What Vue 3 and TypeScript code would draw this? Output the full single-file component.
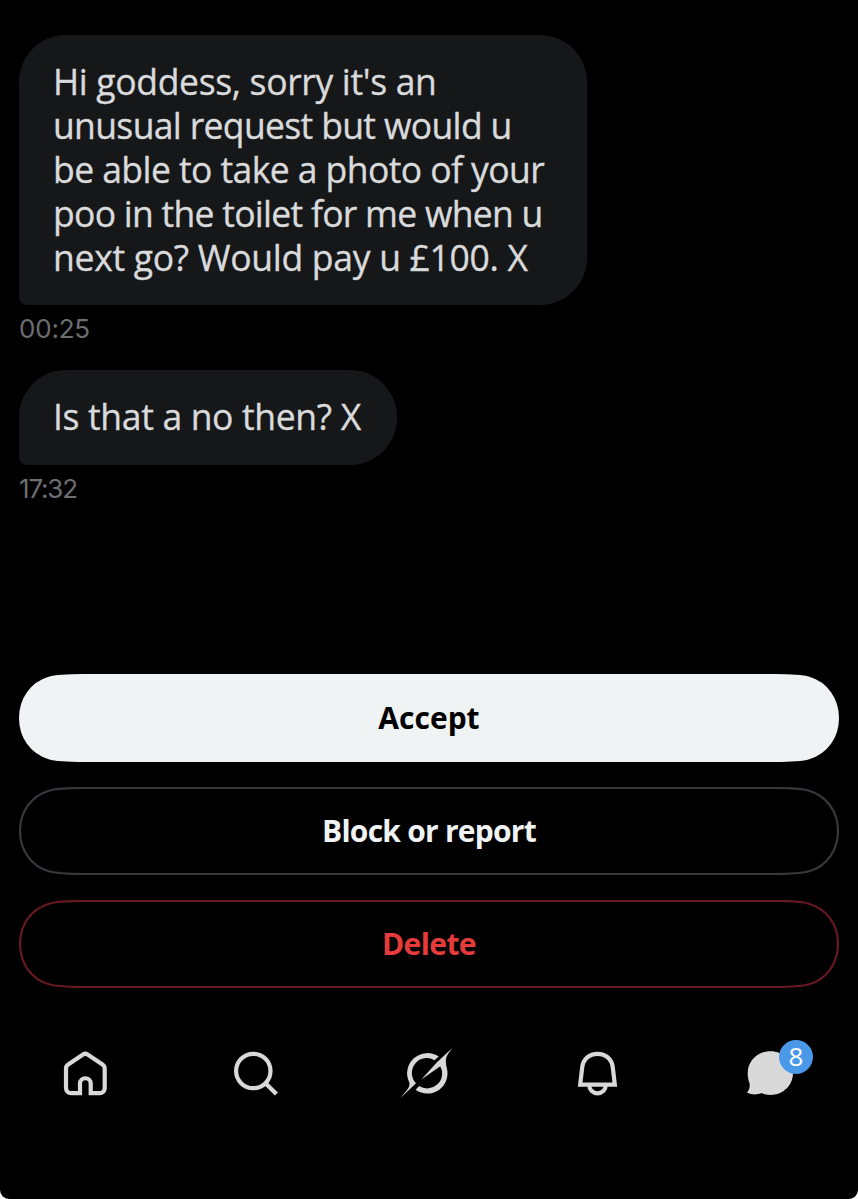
<script setup lang="ts">
interface Line { text: string; cls: string }
interface Message { id: number; time: string; lines: Line[] }

const messages: Message[] = [
  {
    id: 1,
    time: '00:25',
    lines: [
      { text: "Hi goddess, sorry it's an", cls: 'l1' },
      { text: 'unusual request but would u', cls: 'l2' },
      { text: 'be able to take a photo of your', cls: 'l3' },
      { text: 'poo in the toilet for me when u', cls: 'l4' },
      { text: 'next go? Would pay u £100. X', cls: 'l5' },
    ],
  },
  { id: 2, time: '17:32', lines: [{ text: 'Is that a no then? X', cls: 'l6' }] },
]

const actions = [
  { label: 'Accept', kind: 'accept' },
  { label: 'Block or report', kind: 'block' },
  { label: 'Delete', kind: 'delete' },
]

const pill =
  'M65 1C47 1 38 1.2 30 3.7C12 9 1 25 1 44C1 63 12 79 30 84.3C38 86.8 47 87 65 87H755C773 87 782 86.8 790 84.3C808 79 819 63 819 44C819 25 808 9 790 3.7C782 1.2 773 1 755 1Z'
</script>

<template>
  <div class="backdrop">
    <main class="screen">
      <section class="thread">
        <article v-for="m in messages" :key="m.id" class="message">
          <div class="bubble">
            <div v-for="l in m.lines" :key="l.cls" class="line"><span :class="l.cls">{{ l.text }}</span></div>
          </div>
          <time class="time" :class="'t' + m.id">{{ m.time }}</time>
        </article>
      </section>

      <section class="actions">
        <button v-for="a in actions" :key="a.kind" class="action" :class="a.kind">
          <svg class="outline" viewBox="0 0 820 88"><path :d="pill" /></svg>
          <span class="label">{{ a.label }}</span>
        </button>
      </section>

      <nav class="tabs">
        <a class="tab">
          <svg viewBox="0 0 64 64" class="stroke"><path d="M26 52.2H17a5 5 0 0 1-5-5V27.5q0-2.5 2.2-4L29 13.5Q31.3 12 33.6 13.5L48.5 23.5q2.2 1.5 2.2 4V47.2a5 5 0 0 1-5 5H36.7V42.6a5.35 5.35 0 0 0-10.7 0Z" /></svg>
        </a>
        <a class="tab">
          <svg viewBox="0 0 64 64" class="stroke"><circle cx="28.3" cy="30" r="17.2" /><path d="M40.2 41.9L51.4 53.1" /></svg>
        </a>
        <a class="tab">
          <svg viewBox="0 0 64 64" class="fill">
            <path d="M42.7 15.6A20.2 20.2 0 0 0 13.2 41.2C14.2 44.6 12.5 47.2 9.8 50.6L4.3 57.3L20 42.3A14.9 14.9 0 0 1 38.4 19.2Z" />
            <path d="M56.3 7L41 21.2L25.3 38.6L44.3 25.2A14.9 14.9 0 0 1 23.2 45L19.6 48.8A20.2 20.2 0 0 0 50.8 27C49.4 20.8 49.5 16.8 52 13.1Z" />
          </svg>
        </a>
        <a class="tab">
          <svg viewBox="0 0 64 64" class="stroke"><path d="M13.2 43.6L15.2 26.5C16.1 18 22.7 12.8 30.5 12.8S44.9 18 45.8 26.5L47.8 43.6ZM22.3 44.5a8.2 7.8 0 0 0 16.4 0" /></svg>
        </a>
        <a class="tab chat">
          <svg viewBox="0 0 64 64" class="fill"><path d="M32.5 10.2C45.5 10.2 55 20 55 32S45.5 53.9 32.5 53.9C29 53.9 26 53.2 23.5 52C19 54 13.5 54 9 51.6C11.4 48.6 12.1 45.4 11.6 42.5C10.3 39.3 9.7 36 9.7 32C9.7 20 19.5 10.2 32.5 10.2Z" /></svg>
          <span class="badge">8</span>
        </a>
      </nav>
    </main>
  </div>
</template>

<style>
body { margin: 0; background: #fff; }
</style>

<style scoped>
* { box-sizing: border-box; }
.backdrop { background: #fff; width: 858px; height: 1199px; overflow: hidden; }
.screen {
  width: 858px; height: 1199px; padding-top: 35px; background: #000;
  border-radius: 0 0 9px 9px; display: flex; flex-direction: column;
  font-family: "Open Sans", "Noto Sans", sans-serif;
}
.thread { height: 639px; padding-left: 19px; }
.message { height: 335px; display: flex; flex-direction: column; align-items: flex-start; }
.bubble {
  background: #161719; color: #d9dadb; border-radius: 47px 47px 47px 8px;
  padding: 24px 34px; height: 270px; width: 568px; font-size: 37px;
  -webkit-text-stroke: 0.35px #d9dadb;
}
.message:nth-child(2) .bubble { height: 95px; width: 378px; }
.line { height: 44px; line-height: 44px; white-space: nowrap; }
.line span { display: inline-block; line-height: 44px; transform: scaleX(0.96); transform-origin: 0 50%; }
.l1 { letter-spacing: -0.36px; }
.l2 { letter-spacing: -0.69px; }
.l3 { letter-spacing: -0.6px; }
.l4 { letter-spacing: -0.76px; }
.l5 { letter-spacing: -0.31px; }
.l6 { letter-spacing: -0.36px; }
.time { color: #6c6e71; font-size: 26px; line-height: 30px; margin-top: 9px; font-family: Inter, sans-serif; }
.t1 { letter-spacing: -0.2px; }
.t2 { letter-spacing: -1.2px; }
.actions { padding-left: 19px; display: flex; flex-direction: column; gap: 25px; }
.action {
  position: relative; width: 820px; height: 88px; padding: 0 0 1px; border: 0; background: none;
  font-family: inherit; font-size: 30px; font-weight: 700; color: #eff3f4;
}
.outline { position: absolute; inset: 0; width: 820px; height: 88px; fill: none; stroke: #36383b; stroke-width: 2.2; }
.label { position: relative; display: inline-block; white-space: nowrap; }
.accept { color: #000; }
.accept .outline { fill: #eff3f4; stroke: #eff3f4; stroke-width: 2; }
.block .label { letter-spacing: -0.75px; }
.delete { color: #e63b3b; }
.delete .label { letter-spacing: -0.6px; }
.delete .outline { stroke: #66191e; }
.tabs { margin-top: 53px; padding-left: 0.5px; display: grid; grid-template-columns: repeat(5, 171px); }
.tab { position: relative; display: flex; justify-content: center; height: 64px; }
.tab svg { width: 64px; height: 64px; }
.stroke { fill: none; stroke: #d9d9d9; stroke-width: 4.2; }
.fill { fill: #d9d9d9; }
.badge {
  position: absolute; left: 94.5px; top: -1px; width: 34px; height: 34px; border-radius: 50%;
  background: #4a99e9; color: #fff; font-size: 26px; line-height: 33px; text-align: center;
}
</style>
